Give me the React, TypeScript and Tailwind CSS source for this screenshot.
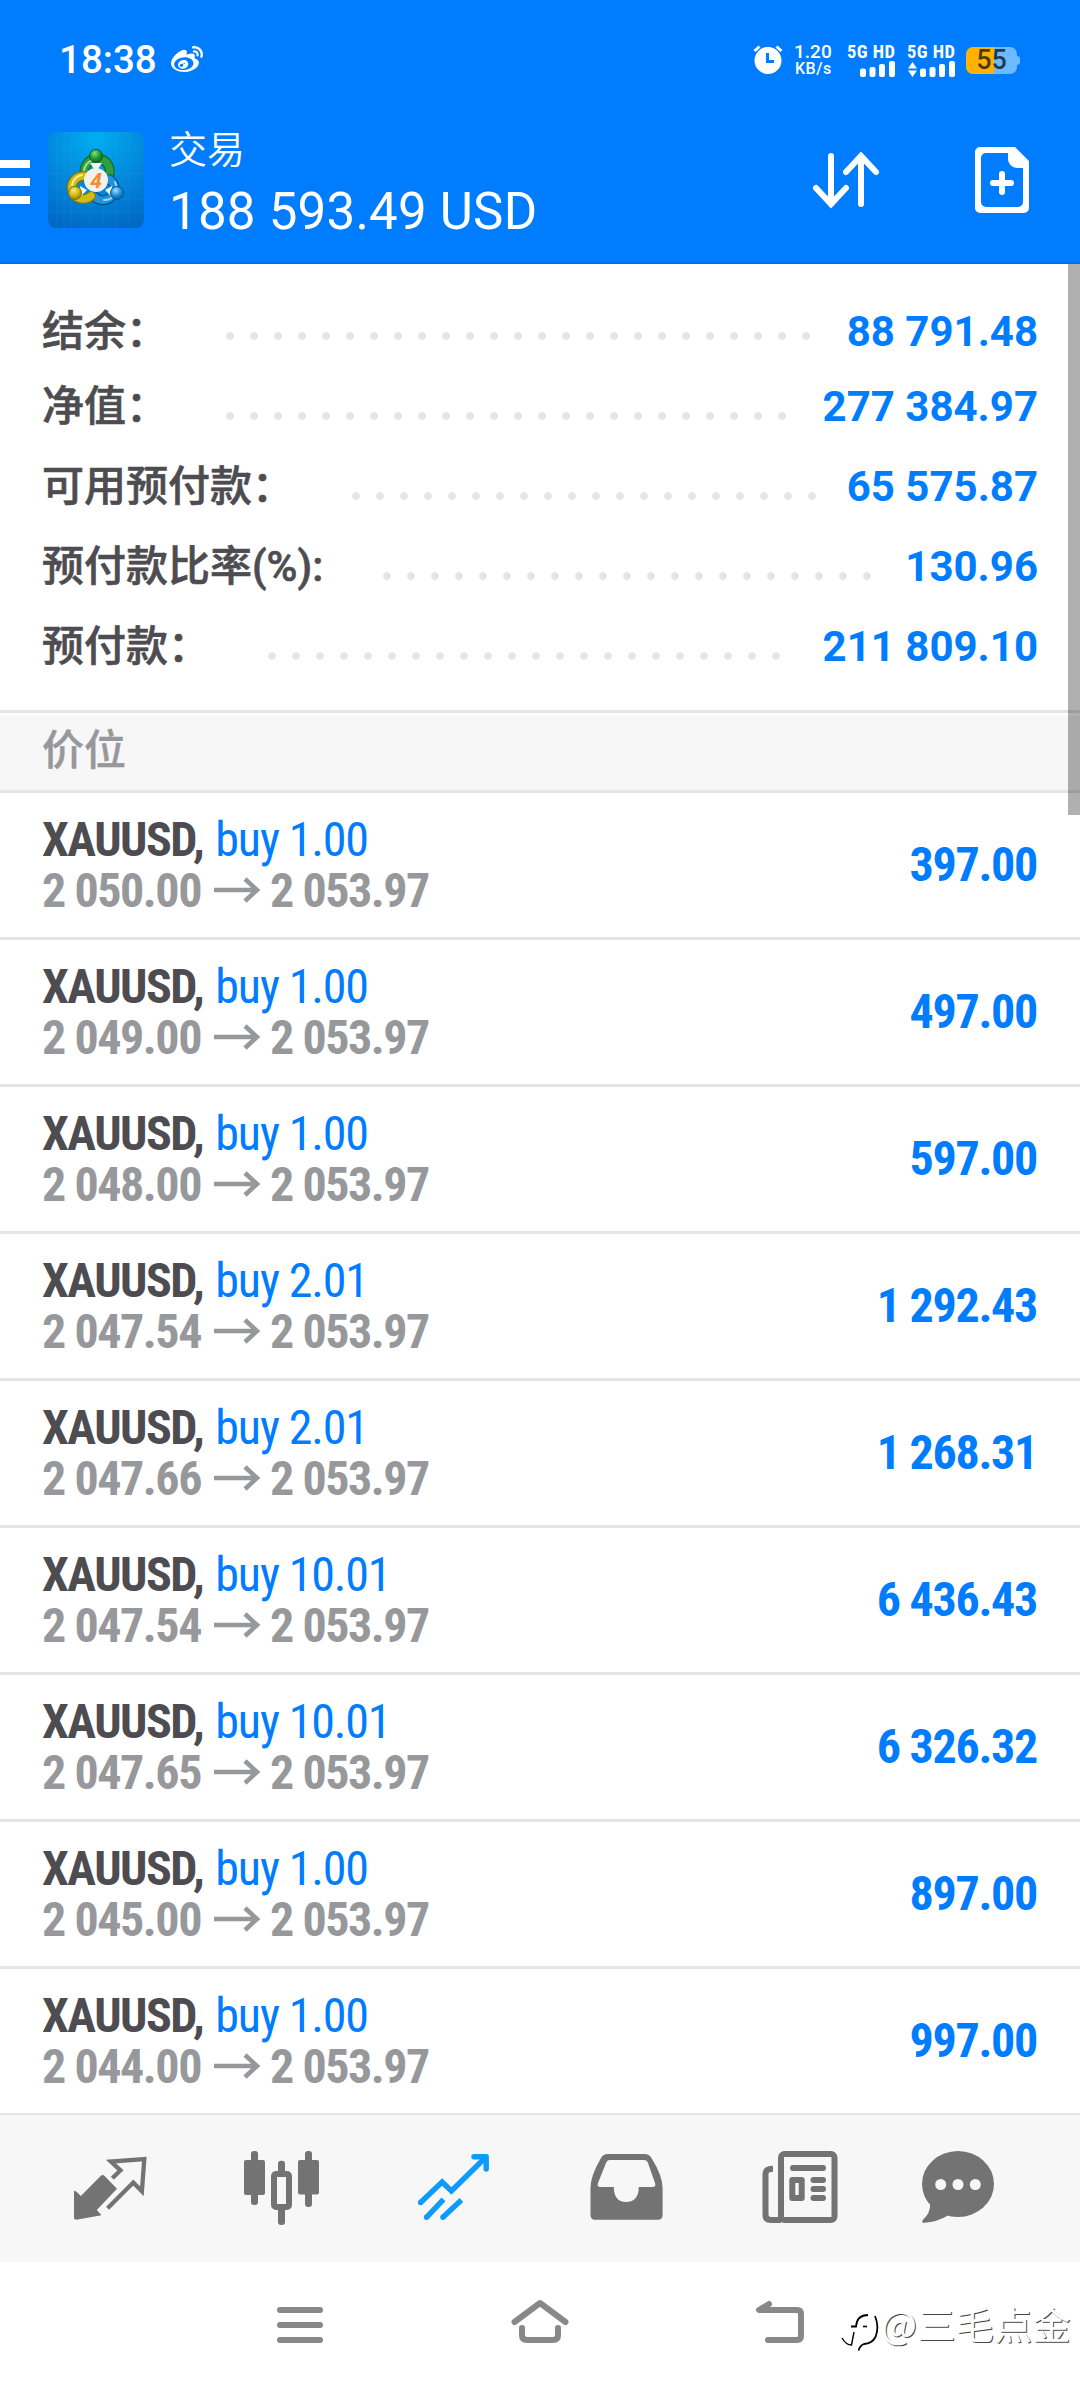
import clsx from "clsx";
import { FaWeibo } from "react-icons/fa";

const summary = [
  { label: "结余：", value: "88 791.48", row: "", labelWidth: "w-[176px]", dots: "w-[600px] mt-[8px]" },
  { label: "净值：", value: "277 384.97", row: "", labelWidth: "w-[176px]", dots: "w-[576px] mt-[18px]" },
  { label: "可用预付款：", value: "65 575.87", row: "mt-[5px]", labelWidth: "w-[302px]", dots: "w-[480px] mt-[18px]" },
  { label: "预付款比率(%):", value: "130.96", row: "mt-[5px]", labelWidth: "w-[333px]", dots: "w-[504px] mt-[18px]" },
  { label: "预付款：", value: "211 809.10", row: "mt-[5px]", labelWidth: "w-[218px]", dots: "w-[528px] mt-[18px]" },
];

const positions = [
  { id: 1, volume: "1.00", open: "2 050.00", profit: "397.00" },
  { id: 2, volume: "1.00", open: "2 049.00", profit: "497.00" },
  { id: 3, volume: "1.00", open: "2 048.00", profit: "597.00" },
  { id: 4, volume: "2.01", open: "2 047.54", profit: "1 292.43" },
  { id: 5, volume: "2.01", open: "2 047.66", profit: "1 268.31" },
  { id: 6, volume: "10.01", open: "2 047.54", profit: "6 436.43" },
  { id: 7, volume: "10.01", open: "2 047.65", profit: "6 326.32" },
  { id: 8, volume: "1.00", open: "2 045.00", profit: "897.00" },
  { id: 9, volume: "1.00", open: "2 044.00", profit: "997.00" },
];

function SignalBars({ arrows }: { arrows?: boolean }) {
  return (
    <svg className="h-4 w-[49px]" viewBox="0 0 49 16" fill="currentColor">
      {arrows && <path d="M1 7.5 5.5 1 10 7.5ZM1 9.5 5.5 16 10 9.5Z" />}
      <rect x="13" y="7.5" width="6" height="8.5" rx="2" />
      <rect x="22.5" y="6" width="6" height="10" rx="2" />
      <rect x="32" y="3" width="6" height="13" rx="2" />
      <rect x="42" y="0" width="6" height="16" rx="2" />
    </svg>
  );
}

function StatusBar() {
  return (
    <div className="flex h-[120px] items-center pl-[59px] pr-[60px]">
      <span className="w-[112px] text-[38.5px] font-medium leading-[40px]">18:38</span>
      <FaWeibo className="h-[32px] w-[32px]" />
      <svg className="ml-auto h-8 w-8" viewBox="0 0 32 32" fill="none">
        <circle cx="16" cy="16.5" r="13.5" fill="#fff" />
        <path d="M2.5 7 7.5 2.5M24.5 2.5 29.5 7" stroke="#fff" strokeWidth="3" />
        <path d="M15.5 9V17.5H22" stroke="#007cff" strokeWidth="3" />
      </svg>
      <div className="ml-[10px] w-[42px] font-medium">
        <p className="text-[19px] leading-[17px]">1.20</p>
        <p className="pl-[1px] text-[16px] leading-[17px] tracking-[0.5px]">KB/s</p>
      </div>
      <div className="ml-[11px] w-[50px]">
        <p className="whitespace-nowrap font-['Roboto_Condensed'] text-[18.5px] font-bold leading-[17px] tracking-[0.4px]">
          5G HD
        </p>
        <SignalBars />
      </div>
      <div className="ml-[10px] w-[50px]">
        <p className="whitespace-nowrap font-['Roboto_Condensed'] text-[18.5px] font-bold leading-[17px] tracking-[0.4px]">
          5G HD
        </p>
        <SignalBars arrows />
      </div>
      <div className="ml-[9px] flex items-center">
        <div className="flex h-[27px] w-[51px] items-center justify-center rounded-[7px] bg-linear-to-r from-[#ffb300] from-55% to-[#6dbbff] to-55% text-[27px] font-medium leading-none text-black/70">
          55
        </div>
        <div className="h-[9px] w-[3px] rounded-r-[3px] bg-[#6dbbff]" />
      </div>
    </div>
  );
}

function AccountLogo() {
  return (
    <svg className="h-24 w-24" viewBox="0 0 96 96">
      <defs>
        <radialGradient id="tile" cx="0.5" cy="0.05" r="1">
          <stop offset="0" stopColor="#00aef0" />
          <stop offset="0.55" stopColor="#0286dc" />
          <stop offset="1" stopColor="#0168c4" />
        </radialGradient>
        <radialGradient id="green" cx="0.4" cy="0.3" r="0.8">
          <stop offset="0" stopColor="#8fdc7a" />
          <stop offset="0.5" stopColor="#1f9a35" />
          <stop offset="1" stopColor="#0a5f22" />
        </radialGradient>
        <radialGradient id="yellow" cx="0.4" cy="0.3" r="0.8">
          <stop offset="0" stopColor="#f6ee7a" />
          <stop offset="0.5" stopColor="#cdbb10" />
          <stop offset="1" stopColor="#7d7000" />
        </radialGradient>
        <radialGradient id="blue" cx="0.4" cy="0.3" r="0.8">
          <stop offset="0" stopColor="#a5e2ff" />
          <stop offset="0.5" stopColor="#1d8fd8" />
          <stop offset="1" stopColor="#03518f" />
        </radialGradient>
      </defs>
      <rect width="96" height="96" rx="8" fill="url(#tile)" />
      <path
        d="M9 0V96M16 0V96M23 0V96M42 0V96M55 0V96M68 0V96M81 0V96M0 15H96M0 28H96M0 41H96M0 54H96M0 67H96M0 80H96"
        stroke="#4fc3ff"
        strokeOpacity="0.1"
      />
      <g fill="none" strokeLinecap="round">
        <path d="M37 42A12.5 12.5 0 1 1 58 48" stroke="#0b6b25" strokeWidth="10" />
        <path d="M37 42A12.5 12.5 0 1 1 58 48" stroke="#2f9f40" strokeWidth="7.5" />
        <path d="M36 40A12 12 0 0 1 45 28" stroke="#a3dd93" strokeWidth="2" />
        <path d="M61 47A11.5 11.5 0 1 1 46 64" stroke="#0a558f" strokeWidth="10" />
        <path d="M61 47A11.5 11.5 0 1 1 46 64" stroke="#2193da" strokeWidth="7.5" />
        <path d="M67 50A12 12 0 0 1 56 68" stroke="#94d8fa" strokeWidth="2" />
        <path d="M36 44A11.5 11.5 0 1 0 43 64" stroke="#857600" strokeWidth="10" />
        <path d="M36 44A11.5 11.5 0 1 0 43 64" stroke="#cfbc18" strokeWidth="7.5" />
        <path d="M34 43A12 12 0 0 0 24 53" stroke="#f7f09a" strokeWidth="2" />
      </g>
      <path d="M42 31H54L50 37H46ZM32 54 39 58 33 64ZM64 54 57 58 63 64Z" fill="#eef6ee" />
      <circle cx="48" cy="24" r="6.5" fill="url(#green)" stroke="#0a5f22" />
      <circle cx="27" cy="61" r="6.5" fill="url(#yellow)" stroke="#857600" />
      <circle cx="69" cy="61" r="6.5" fill="url(#blue)" stroke="#0a558f" />
      <circle cx="48" cy="48" r="12" fill="#f1f1ee" />
      <text x="48" y="55.5" textAnchor="middle" fontFamily="Roboto" fontSize="21" fontStyle="italic" fontWeight="700" fill="#f58b2c">
        4
      </text>
    </svg>
  );
}

function Header() {
  return (
    <header className="h-[264px] border-b-2 border-[#0071e6] bg-[#007cff] text-white">
      <StatusBar />
      <div className="flex h-[120px] items-center pr-[48px]">
        <div className="mt-1 flex w-[30px] flex-col gap-[10px]">
          <div className="h-2 bg-white" />
          <div className="h-2 bg-white" />
          <div className="h-2 bg-white" />
        </div>
        <div className="ml-[18px]">
          <AccountLogo />
        </div>
        <div className="ml-[25px] pt-[6px]">
          <p className="text-[38px] font-[350] leading-[52px]">交易</p>
          <p className="mt-[6px] whitespace-nowrap text-[51px] leading-[60px] tracking-[0.25px]">188 593.49 USD</p>
        </div>
        <svg
          className="ml-auto h-[72px] w-[72px]"
          viewBox="0 0 72 72"
          fill="none"
          stroke="#fff"
          strokeWidth="6"
          strokeLinecap="round"
        >
          <path d="M21 12V60M6 44 21 60 36 44" />
          <path d="M51 60V12M36 28 51 12 66 28" />
        </svg>
        <svg className="ml-[90px] h-[72px] w-[60px]" viewBox="0 0 60 72" fill="none">
          <path
            fillRule="evenodd"
            d="M8 3H43L57 17V64A5 5 0 0 1 52 69H8A5 5 0 0 1 3 64V8A5 5 0 0 1 8 3ZM14 9A5 5 0 0 0 9 14V58A5 5 0 0 0 14 63H46A5 5 0 0 0 51 58V24H45A9 9 0 0 1 36 15V9Z"
            fill="#fff"
          />
          <path d="M30 30V48M21 39H39" stroke="#fff" strokeWidth="6" strokeLinecap="round" />
        </svg>
      </div>
    </header>
  );
}

function Summary() {
  return (
    <section className="h-[446px] pl-[42px] pr-[42px] pt-[30px]">
      {summary.map((item) => (
        <div
          key={item.label}
          className={clsx("flex h-[75px] items-center text-[42px] leading-[75px]", item.row)}
        >
          <span
            className={clsx(
              "shrink-0 whitespace-nowrap font-medium text-[#4d4c51] [-webkit-text-stroke:0.6px_#4d4c51]",
              item.labelWidth
            )}
          >
            {item.label}
          </span>
          <div
            className={clsx(
              "h-6 shrink-0 bg-[radial-gradient(circle,#e5e5e5_3.5px,transparent_4.2px)] bg-size-[24px_24px]",
              item.dots
            )}
          />
          <span className="ml-auto whitespace-nowrap font-bold text-[#007cff]">{item.value}</span>
        </div>
      ))}
    </section>
  );
}

function PositionRow({ position }: { position: (typeof positions)[number] }) {
  return (
    <div className="flex h-[147px] justify-between border-b-[3px] border-[#e4e4e4] pl-[42px] pr-[43px] font-['Roboto_Condensed'] text-[48px]">
      <div className="pt-[21px] leading-[51px]">
        <p className="flex whitespace-nowrap">
          <span className="font-bold tracking-[-1.5px] text-[#4d4c51]">XAUUSD,</span>
          <span className="ml-[12px] tracking-[-1.15px] text-[#007cff]">buy {position.volume}</span>
        </p>
        <p className="flex whitespace-nowrap font-bold tracking-[-1.45px] text-[#97989b]">
          <span>{position.open}</span>
          <svg
            className="ml-[13px] mr-[9px] mt-[12px] h-[26px] w-[47px]"
            viewBox="0 0 47 26"
            fill="none"
            stroke="currentColor"
            strokeWidth="4.6"
          >
            <path d="M0 13H42M31 2 43 13 31 24" />
          </svg>
          <span>2 053.97</span>
        </p>
      </div>
      <span className="whitespace-nowrap font-bold leading-[144px] tracking-[-1.3px] text-[#007cff]">
        {position.profit}
      </span>
    </div>
  );
}

function TabBar() {
  return (
    <nav className="grid h-[149px] grid-cols-6 justify-items-center border-t-2 border-[#e5e5e5] bg-[#f7f7f8] px-6 pt-[25px] text-[#737373]">
      {/* Quotes */}
      <svg className="h-24 w-24" viewBox="0 0 96 96" fill="currentColor">
        <path d="M12 50.7Q13.5 50.3 18.9 56L38.6 36Q40.6 34 42.6 36L55 48.7 34.8 70 39.5 75.3 14.4 79.7Q12 79.7 12 77.7Z" />
        <path
          d="M50.3 38.3 58.5 30.3 48.9 21.5 82.3 19 79.9 51.3 71.3 42.5 45.6 68.3"
          fill="none"
          stroke="currentColor"
          strokeWidth="4.3"
        />
      </svg>
      {/* Charts */}
      <svg className="h-24 w-24" viewBox="0 0 96 96" fill="currentColor">
        <rect x="17" y="11" width="7" height="54" rx="3" />
        <rect x="10" y="20" width="21" height="35" rx="2" />
        <rect x="44" y="20.7" width="7" height="14" rx="3" />
        <rect x="44" y="68" width="7" height="17" rx="3" />
        <rect x="40" y="34" width="15" height="33" rx="2" fill="none" stroke="currentColor" strokeWidth="6" />
        <rect x="71" y="11" width="7" height="56" rx="3" />
        <rect x="64" y="20" width="21" height="34.5" rx="2" />
      </svg>
      {/* Trade */}
      <svg
        className="h-24 w-24 text-[#0f9bfc]"
        viewBox="0 0 96 96"
        fill="none"
        stroke="currentColor"
        strokeWidth="5.4"
      >
        <path d="M14.6 62.5 36.1 42 45.4 51 79 18" strokeLinejoin="miter" />
        <path d="M68 16.8H80.2V29" strokeLinecap="round" strokeLinejoin="round" />
        <path d="M72 17 80 25V17Z" fill="currentColor" stroke="none" />
        <path d="M20.5 77.3 37.5 59.3M36.9 77.3 55.4 60" />
        <path d="M14.6 62.5h.01M20.5 77.3h.01M36.9 77.3h.01" strokeLinecap="round" />
      </svg>
      {/* History */}
      <svg className="h-24 w-24" viewBox="0 0 96 96" fill="currentColor">
        <path
          fillRule="evenodd"
          d="M30 14H67Q71 14 73.5 18 84.6 36 84.6 48V75Q84.6 79.7 80 79.7H17Q12.5 79.7 12.5 75V48Q12.5 36 23 18 25 14 30 14ZM32 20Q29 20 28 23L20 43Q18.8 47 22 47H35.8Q36 62 48 62 60.5 62 60.8 47H74Q78.5 47 77 43L70 23Q69 20 66 20Z"
        />
      </svg>
      {/* News */}
      <svg className="h-24 w-24" viewBox="0 0 96 96" fill="none" stroke="currentColor" strokeWidth="6">
        <rect x="31" y="14" width="53.5" height="66" rx="3.5" />
        <path d="M23 28.8Q15.5 28.8 15.5 34V75Q15.5 80 21 80H31" />
        <path d="M43 28H73M63.5 40H73M63.5 49H73M63.5 58H73" strokeLinecap="round" />
        <rect x="42.3" y="40" width="9.4" height="18" strokeLinejoin="round" />
      </svg>
      {/* Mailbox */}
      <svg className="mr-6 h-24 w-24" viewBox="0 0 96 96" fill="currentColor">
        <ellipse cx="48" cy="44" rx="36" ry="33" />
        <path d="M20.2 64Q20.5 73 12.8 80 11 83 14.5 82.8 27 82 38 75.5Z" />
        <g fill="#f7f7f8">
          <circle cx="30.7" cy="44.5" r="5.5" />
          <circle cx="48" cy="44.5" r="5.5" />
          <circle cx="65.3" cy="44.5" r="5.5" />
        </g>
      </svg>
    </nav>
  );
}

function SystemNav() {
  return (
    <div className="flex h-[126px] items-center bg-white pl-[270px]">
      <svg className="h-[60px] w-[60px]" viewBox="0 0 60 60" stroke="#888" strokeWidth="6" strokeLinecap="round">
        <path d="M10 15H50M10 30H50M10 45H50" />
      </svg>
      <svg
        className="ml-[180px] h-[60px] w-[60px]"
        viewBox="0 0 60 60"
        fill="none"
        stroke="#888"
        strokeWidth="6"
        strokeLinecap="round"
        strokeLinejoin="round"
      >
        <path d="M4.5 27 30 8 55.5 27" />
        <path d="M12 33V40Q12 45 17 45H43Q48 45 48 40V33" />
      </svg>
      <svg
        className="ml-[180px] h-[60px] w-[60px]"
        viewBox="0 0 60 60"
        fill="none"
        stroke="#888"
        strokeWidth="6"
        strokeLinecap="round"
        strokeLinejoin="round"
      >
        <path d="M19 9 9 15H47Q51 15 51 19V41Q51 45 47 45H18" />
      </svg>
    </div>
  );
}

function Watermark() {
  return (
    <div className="absolute bottom-[20px] right-[9px] flex h-[74px] items-center">
      <svg className="h-[44px] w-[40px]" viewBox="0 0 40 44" fill="none" stroke="#000">
        <path d="M10 17.5H15Q16 6 27 6" strokeWidth="1.8" />
        <path d="M34 7Q38.5 18 34.5 28 31 34.5 23 35 19 36.5 17.5 41.5" strokeWidth="1.8" />
        <path d="M1 29Q5 36 10.5 36L13 23" strokeWidth="1.4" />
        <path d="M22 17.5H26" strokeWidth="1.6" />
      </svg>
      <span className="-mt-[16px] whitespace-nowrap font-['Noto_Sans_CJK_SC',sans-serif] text-[38px] leading-[74px] tracking-[0.4px] text-white [text-shadow:1px_1px_0_#444]">
        @三毛点金
      </span>
    </div>
  );
}

export default function App() {
  return (
    <div className="relative h-[2388px] w-[1080px] overflow-hidden bg-white font-['Roboto','Noto_Sans_CJK_SC',sans-serif]">
      <Header />
      <Summary />
      <div className="border-y-[3px] border-[#e4e4e4] pt-[3px]">
        <h2 className="h-[74px] bg-[#f7f7f7] pl-[42px] text-[42px] font-medium leading-[70px] text-[#97989b] [-webkit-text-stroke:0.4px_#97989b]">
          价位
        </h2>
      </div>
      <main className="h-[1320px] overflow-hidden">
        {positions.map((position) => (
          <PositionRow key={position.id} position={position} />
        ))}
      </main>
      <TabBar />
      <SystemNav />
      {/* Scroll thumb */}
      <div className="absolute right-0 top-[264px] h-[551px] w-[12px] bg-black/31" />
      <Watermark />
    </div>
  );
}
